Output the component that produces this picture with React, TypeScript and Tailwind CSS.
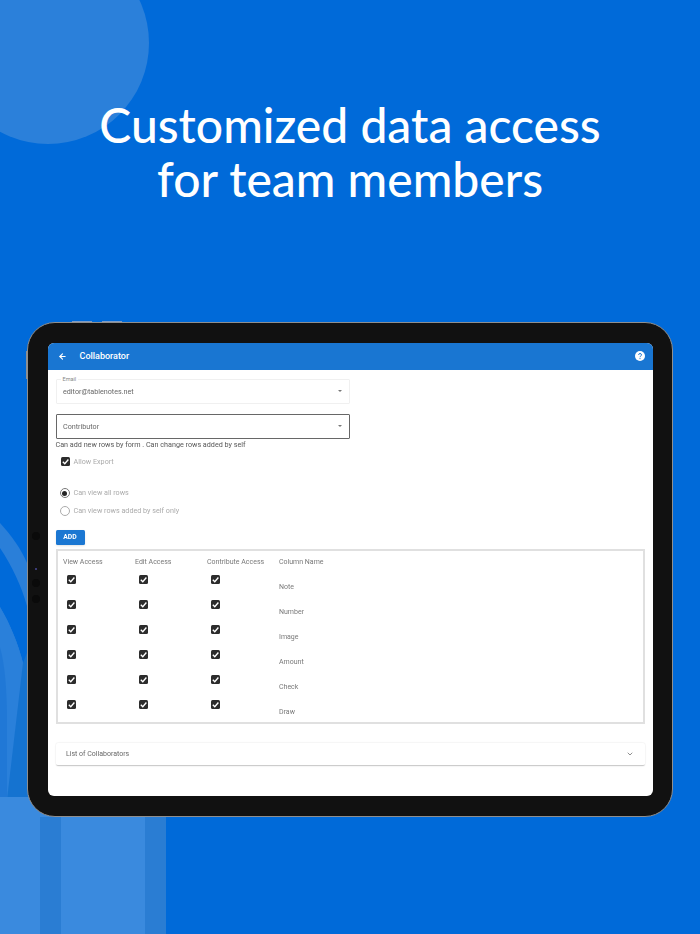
import React from 'react';
import { ArrowLeft, ChevronDown } from 'lucide-react';

const accessRows = ['Note', 'Number', 'Image', 'Amount', 'Check', 'Draw'];

function Tick() {
  return (
    <span className="flex h-[9px] w-[9px] items-center justify-center rounded-[1.5px] bg-[#2a2a2a]">
      <svg viewBox="0 0 10 10" className="h-[9px] w-[9px]" fill="none" stroke="#fff" strokeWidth="1.5">
        <path d="M2 5.2 4.2 7.4 8.2 2.8" />
      </svg>
    </span>
  );
}

function Background() {
  return (
    <svg className="absolute inset-0" width="700" height="934" viewBox="0 0 700 934" fill="none">
      <circle cx="48" cy="43" r="101" fill="#2b80da" />
      <path d="M0 523C12 536 21 549 27 563V800H0Z" fill="#2a7fd9" />
      <path d="M0 548C12 566 21 585 27 606V664L23 663C18 643 10 624 0 607Z" fill="#006ad9" />
      <path d="M0 607C10 624 18 643 23 663L7 800H0Z" fill="#2a80da" />
      <path d="M0 647C5 665 7 690 7 720V800H0Z" fill="#2078d6" />
      <path d="M23 663 28 650V800H7Z" fill="#1573d0" />
      <rect x="0" y="797" width="166" height="137" fill="#3a8ade" />
      <rect x="40" y="817" width="21" height="117" fill="#2a7dd3" />
      <rect x="145" y="817" width="21" height="117" fill="#2a7dd3" />
    </svg>
  );
}

function Device({ children }: { children: React.ReactNode }) {
  return (
    <div className="relative ml-[27px] h-[495px] w-[646px] rounded-[28px] border-[1.5px] border-[#8f8f8f] bg-[#111] p-[19.5px]">
      <span className="absolute left-[44px] top-[-2.5px] h-[1px] w-[20px] bg-[#7f9cc4]" />
      <span className="absolute left-[74px] top-[-2.5px] h-[1px] w-[20px] bg-[#7f9cc4]" />
      <span className="absolute left-[-2.5px] top-[28px] h-[28px] w-[1px] bg-[#8f8f8f]" />
      <span className="absolute left-[4px] top-[209px] h-[8px] w-[8px] rounded-full bg-[#0a0a0a]" />
      <span className="absolute left-[7px] top-[245px] h-[2px] w-[2px] rounded-full bg-[#4a4a9a]" />
      <span className="absolute left-[4px] top-[256px] h-[8px] w-[8px] rounded-full bg-[#0a0a0a]" />
      <span className="absolute left-[4px] top-[272px] h-[8px] w-[8px] rounded-full bg-[#0a0a0a]" />
      {children}
    </div>
  );
}

function SelectBox({ value, active }: { value: string; active?: boolean }) {
  return (
    <div
      className={`flex h-[25px] w-[294.5px] items-center justify-between rounded-[1px] border px-[6.5px] ${
        active ? 'border-[#666]' : 'border-[#f0f0f0]'
      }`}
    >
      <span className="pt-[2px] text-[7.2px] text-[#666]">{value}</span>
      <span className="mr-[1px] h-0 w-0 border-x-[2.5px] border-t-[2.5px] border-x-transparent border-t-[#777]" />
    </div>
  );
}

export default function App() {
  return (
    <div className="relative h-[934px] w-[700px] overflow-hidden bg-[#006ad9] font-['Roboto',sans-serif]">
      <Background />
      <div className="relative">
        <h1 className="pt-[98px] text-center font-['Lato',sans-serif] text-[48px] font-medium leading-[54px] text-white">
          Customized data access
          <br />
          for team members
        </h1>
        <div className="mt-[116px]">
          <Device>
            <div className="h-[453px] overflow-hidden rounded-[6px] bg-white">
              <header className="flex h-[27px] items-center bg-[#1976d2] pl-[10px] pr-[8px] text-white">
                <ArrowLeft size={9} strokeWidth={3} />
                <span className="ml-[13px] pt-[2px] text-[9px] font-medium">Collaborator</span>
                <svg viewBox="0 0 10 10" className="ml-auto h-[10px] w-[10px]">
                  <circle cx="5" cy="5" r="5" fill="#fff" />
                  <path d="M3.6 3.9C3.6 2 6.5 2 6.5 3.9 6.5 5 5 5 5 6.2" fill="none" stroke="#1976d2" strokeWidth="1" />
                  <circle cx="5" cy="7.6" r=".6" fill="#1976d2" />
                </svg>
              </header>
              <main className="px-[8px] opacity-[0.99]">
                <div className="relative mt-[9px]">
                  <span className="absolute left-[5px] top-[-3px] bg-white px-[2px] text-[5.5px] leading-[6px] text-[#888]">Email</span>
                  <SelectBox value="editor@tablenotes.net" />
                </div>
                <div className="mt-[10px]">
                  <SelectBox value="Contributor" active />
                </div>
                <p className="mt-[1px] text-[7.2px] leading-[10px] text-[#555]">Can add new rows by form . Can change rows added by self</p>
                <label className="ml-[5px] mt-[7px] flex items-center gap-[4px]">
                  <Tick />
                  <span className="text-[7.2px] text-[#aaa]">Allow Export</span>
                </label>
                <div className="ml-[4px] mt-[21px] flex items-center gap-[4px]">
                  <span className="flex h-[10px] w-[10px] items-center justify-center rounded-full border border-[#777]">
                    <span className="h-[5px] w-[5px] rounded-full bg-[#222]" />
                  </span>
                  <span className="text-[7.2px] leading-[10px] text-[#aaa]">Can view all rows</span>
                </div>
                <div className="ml-[4px] mt-[7.5px] flex items-center gap-[4px]">
                  <span className="h-[10px] w-[10px] rounded-full border border-[#aaa]" />
                  <span className="text-[7.2px] leading-[10px] text-[#aaa]">Can view rows added by self only</span>
                </div>
                <button className="mt-[14px] flex h-[15px] w-[29px] items-center justify-center rounded-[1.5px] bg-[#1976d2] text-[6.8px] font-bold text-white shadow-sm">
                  ADD
                </button>
                <div className="mt-[4px] h-[175px] w-[589.5px] border-2 border-[#e0e0e0] pl-[5.5px] pt-[6.5px]">
                  <div className="grid grid-cols-[72px_72px_72px_1fr] text-[7px] leading-[10px] text-[#777]">
                    <span>View Access</span>
                    <span>Edit Access</span>
                    <span>Contribute Access</span>
                    <span>Column Name</span>
                  </div>
                  {accessRows.map((name) => (
                    <div key={name} className="grid h-[25px] grid-cols-[72px_72px_72px_1fr] pt-[7.5px] text-[7px] leading-[10px] text-[#777]">
                      <span className="pl-[4px]"><Tick /></span>
                      <span className="pl-[4px]"><Tick /></span>
                      <span className="pl-[4px]"><Tick /></span>
                      <span className="pt-[7px]">{name}</span>
                    </div>
                  ))}
                </div>
                <div className="mt-[19px] flex h-[23px] w-[589.5px] items-center justify-between rounded-[2px] border-b border-b-[#ccc] pl-[10.5px] pr-[11px] shadow-[0_0_2px_rgba(0,0,0,0.15)]">
                  <span className="text-[7px] text-[#666]">List of Collaborators</span>
                  <ChevronDown size={8} strokeWidth={2.5} className="text-[#777]" />
                </div>
              </main>
            </div>
          </Device>
        </div>
      </div>
    </div>
  );
}
